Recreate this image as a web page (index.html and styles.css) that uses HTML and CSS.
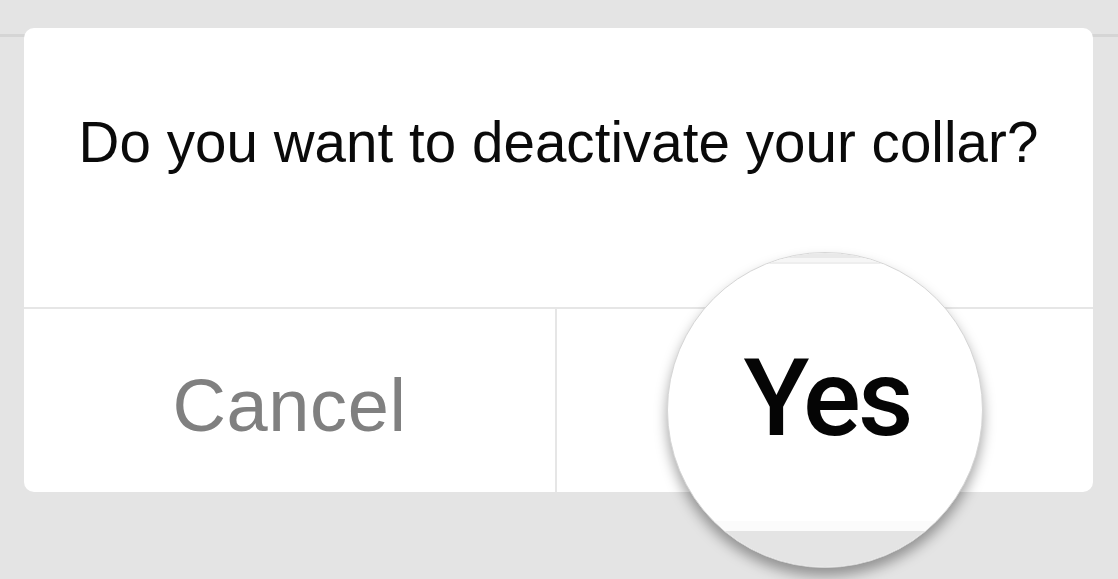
FILE: index.html
```html
<!DOCTYPE html>
<html lang="en">
<head>
<meta charset="utf-8">
<title>Deactivate collar</title>
<link rel="stylesheet" href="styles.css">
</head>
<body>
<div class="page">
  <div class="dialog">
    <div class="message">Do you want to deactivate your collar?</div>
    <div class="actions">
      <div class="btn btn-cancel">Cancel</div>
      <div class="btn btn-yes" aria-label="Yes"></div>
    </div>
  </div>
</div>
<div class="lens">
  <div class="lens-top"></div>
  <div class="lens-yes">Yes</div>
  <div class="lens-fill"></div>
  <div class="lens-fade"></div>
  <div class="lens-bottom"></div>
</div>
</body>
</html>
```
FILE: styles.css
```css
html, body {
  margin: 0;
  padding: 0;
}
body {
  width: 1118px;
  height: 579px;
  overflow: hidden;
  position: relative;
  font-family: "Liberation Sans", Arial, sans-serif;
  background: linear-gradient(#e4e4e4 0 34px, #d5d5d5 34px 37px, #e4e4e4 37px);
}
.page {
  padding: 28px 25px 0 24px;
}
.dialog {
  width: 1069px;
  height: 464px;
  background: #fff;
  border-radius: 10px;
  display: flex;
  flex-direction: column;
  overflow: hidden;
}
.message {
  box-sizing: border-box;
  height: 281px;
  padding-top: 82px;
  border-bottom: 2px solid #e6e6e6;
  font-size: 56.5px;
  line-height: 66px;
  text-align: center;
  color: #0a0a0a;
  letter-spacing: 0.05px;
}
.actions {
  flex: 1;
  display: grid;
  grid-template-columns: 533px 1fr;
}
.btn {
  display: flex;
  align-items: center;
  justify-content: center;
  padding-top: 10px;
}
.btn-cancel {
  border-right: 2px solid #e6e6e6;
  font-size: 74px;
  color: #808080;
  letter-spacing: 0.6px;
}
.btn-yes {
  font-size: 74px;
  color: #000;
}
.lens {
  position: absolute;
  left: 667px;
  top: 252px;
  width: 316px;
  height: 316px;
  box-sizing: border-box;
  border-radius: 50%;
  border: 1px solid #d6d6d6;
  background: #fff;
  overflow: hidden;
  display: flex;
  flex-direction: column;
  box-shadow: 0 8px 13px rgba(0, 0, 0, 0.36);
}
.lens-top {
  height: 12px;
  background: linear-gradient(#e9e9e9 0 5px, #f6f6f6 5px 9px, #eeeeee 9px 11px, #fff 11px);
}
.lens-yes {
  margin-top: 79px;
  height: 108px;
  line-height: 108px;
  font-family: Roboto, "Liberation Sans", sans-serif;
  font-size: 108px;
  font-weight: 500;
  letter-spacing: -3px;
  text-align: center;
  color: #050505;
  padding-left: 4px;
}
.lens-fill {
  flex: 1;
}
.lens-fade {
  height: 10px;
  background: #fbfbfb;
}
.lens-bottom {
  height: 36px;
  background: #e4e4e4;
}
```
